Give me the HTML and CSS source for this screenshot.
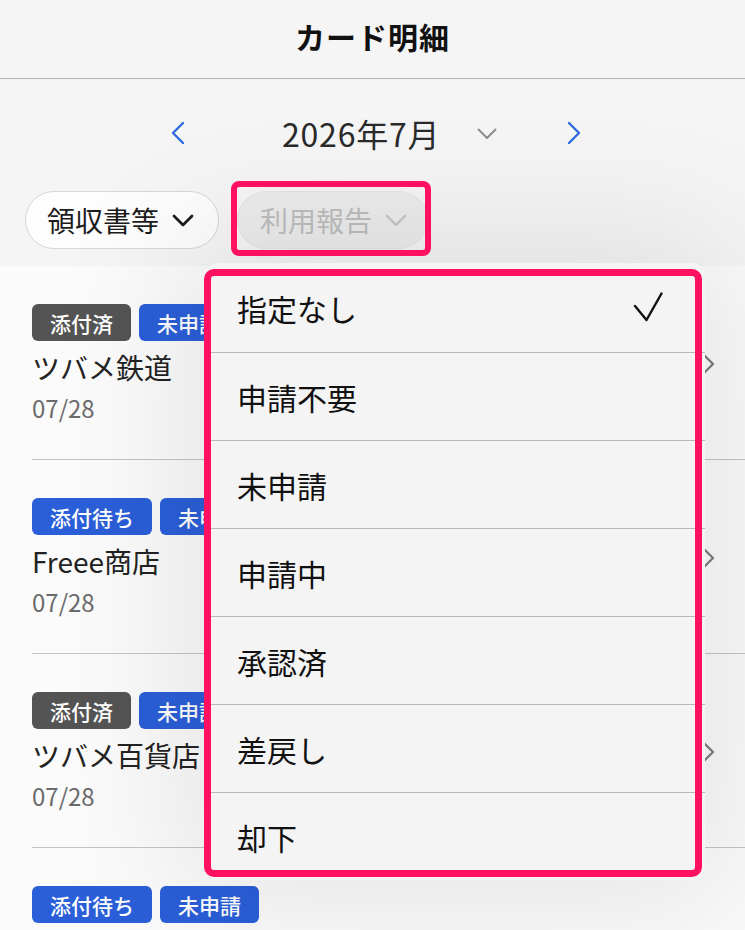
FILE: index.html
```html
<!DOCTYPE html>
<html lang="ja">

<head>
    <meta charset="UTF-8">
    <meta name="viewport" content="width=device-width, initial-scale=1.0">
    <title>カード明細</title>
    <link rel="stylesheet" href="styles.css">
</head>

<body>
    <header class="topbar">
        <h1>カード明細</h1>
    </header>

    <section class="controls">
        <div class="month-nav">
            <svg class="nav-prev" width="14" height="24" viewBox="0 0 14 24"><path d="M12 2 L2 12 L12 22" fill="none" stroke="#2f6be3" stroke-width="2.4" stroke-linecap="round" stroke-linejoin="round"/></svg>
            <span class="month-label">2026年7月</span>
            <svg class="month-down" width="20" height="12" viewBox="0 0 20 12"><path d="M1.5 1.5 L10 10 L18.5 1.5" fill="none" stroke="#8e8e8e" stroke-width="2" stroke-linecap="round" stroke-linejoin="round"/></svg>
            <svg class="nav-next" width="14" height="24" viewBox="0 0 14 24"><path d="M2 2 L12 12 L2 22" fill="none" stroke="#2f6be3" stroke-width="2.4" stroke-linecap="round" stroke-linejoin="round"/></svg>
        </div>

        <div class="filters">
            <button class="pill">領収書等
                <svg width="22" height="13" viewBox="0 0 22 13"><path d="M2 2 L11 11 L20 2" fill="none" stroke="#1c1c1c" stroke-width="2.8" stroke-linecap="round" stroke-linejoin="round"/></svg>
            </button>
            <button class="pill pill-open">利用報告
                <svg width="22" height="13" viewBox="0 0 22 13"><path d="M2 2 L11 11 L20 2" fill="none" stroke="#c4c4c4" stroke-width="2.4" stroke-linecap="round" stroke-linejoin="round"/></svg>
            </button>
        </div>
    </section>

    <ul class="card-list">
        <li class="card-item">
            <div class="item-body">
                <div class="tags"><span class="tag tag-done">添付済</span><span class="tag">未申請</span></div>
                <div class="item-name">ツバメ鉄道</div>
                <div class="item-date">07/28</div>
            </div>
            <svg class="item-arrow" width="13" height="22" viewBox="0 0 13 22"><path d="M2 2 L11 11 L2 20" fill="none" stroke="#7a7a7a" stroke-width="2.2" stroke-linecap="round" stroke-linejoin="round"/></svg>
        </li>
        <li class="card-item">
            <div class="item-body">
                <div class="tags"><span class="tag">添付待ち</span><span class="tag">未申請</span></div>
                <div class="item-name">Freee商店</div>
                <div class="item-date">07/28</div>
            </div>
            <svg class="item-arrow" width="13" height="22" viewBox="0 0 13 22"><path d="M2 2 L11 11 L2 20" fill="none" stroke="#7a7a7a" stroke-width="2.2" stroke-linecap="round" stroke-linejoin="round"/></svg>
        </li>
        <li class="card-item">
            <div class="item-body">
                <div class="tags"><span class="tag tag-done">添付済</span><span class="tag">未申請</span></div>
                <div class="item-name">ツバメ百貨店</div>
                <div class="item-date">07/28</div>
            </div>
            <svg class="item-arrow" width="13" height="22" viewBox="0 0 13 22"><path d="M2 2 L11 11 L2 20" fill="none" stroke="#7a7a7a" stroke-width="2.2" stroke-linecap="round" stroke-linejoin="round"/></svg>
        </li>
        <li class="card-item">
            <div class="item-body">
                <div class="tags"><span class="tag">添付待ち</span><span class="tag">未申請</span></div>
            </div>
        </li>
    </ul>

    <!-- status dropdown -->
    <div class="menu">
        <div class="menu-row">指定なし
            <svg class="menu-check" width="30" height="30" viewBox="0 0 30 30"><path d="M2 14 L13.5 28 L28.5 1.5" fill="none" stroke="#111" stroke-width="2.4" stroke-linecap="round" stroke-linejoin="round"/></svg>
        </div>
        <div class="menu-row">申請不要</div>
        <div class="menu-row">未申請</div>
        <div class="menu-row">申請中</div>
        <div class="menu-row">承認済</div>
        <div class="menu-row">差戻し</div>
        <div class="menu-row">却下</div>
    </div>

    <!-- highlight marks -->
    <div class="mark mark-filter"></div>
    <div class="mark mark-menu"></div>
</body>

</html>
```

FILE: styles.css
```css
* {
    margin: 0;
    padding: 0;
    box-sizing: border-box;
}

html,
body {
    height: 100%;
    overflow: hidden;
}

body {
    font-family: "Noto Sans CJK JP", "Noto Sans", sans-serif;
    background: #f5f5f5;
    color: #1a1a1a;
    position: relative;
}

/* Title bar */
.topbar {
    height: 79px;
    border-bottom: 1px solid #b4b4b4;
    display: flex;
    justify-content: center;
    align-items: center;
    padding-bottom: 6px;
}

.topbar h1 {
    font-size: 30px;
    font-weight: 700;
    color: #111;
    letter-spacing: 1px;
}

/* Month + filters */
.controls {
    height: 187px;
    padding: 30px 0 0 25px;
}

.month-nav {
    height: 48px;
    display: flex;
    align-items: center;
    padding-left: 146px;
}

.month-label {
    font-size: 32px;
    color: #2a2a2a;
    margin: 0 37px 0 97px;
    line-height: 1;
    letter-spacing: 0.8px;
}

.month-down {
    margin-top: 2px;
    margin-right: 70px;
}

.filters {
    display: flex;
    gap: 18px;
    margin-top: 34px;
}

.pill {
    height: 58px;
    border-radius: 29px;
    border: 1px solid #d6d6d6;
    background: #fdfdfd;
    font-family: inherit;
    font-size: 28px;
    color: #1c1c1c;
    display: flex;
    align-items: center;
    gap: 13px;
    padding: 0 24px 0 21px;
}

.pill-open {
    background: #ececec;
    border-color: #e4e4e4;
    color: #bdbdbd;
    padding: 0 20px 0 22px;
}

/* List */
.card-list {
    list-style: none;
    background: #fbfbfb;
    padding-left: 32px;
}

.card-item {
    display: flex;
    align-items: center;
    border-bottom: 1px solid #c4c4c4;
    padding: 38px 30px 35px 0;
}

.item-body {
    flex: 1;
}

.tags {
    display: flex;
    gap: 8px;
}

.tag {
    height: 37px;
    padding: 0 18px;
    border-radius: 6px;
    background: #2b5fd9;
    color: #fff;
    font-size: 21px;
    font-weight: 500;
    display: flex;
    align-items: center;
}

.tag-done {
    background: #545454;
}

.item-name {
    font-size: 28px;
    line-height: 36px;
    margin-top: 8px;
    color: #222;
}

.item-date {
    font-size: 24px;
    line-height: 32px;
    margin-top: 7px;
    color: #6b6b6b;
}

/* Dropdown menu */
.menu {
    position: absolute;
    left: 205px;
    top: 263px;
    width: 500px;
    padding-top: 1px;
    background: #f4f4f5;
    border-radius: 14px;
    box-shadow: 0 0 140px 30px rgba(0, 0, 0, 0.09);
}

.menu-row {
    height: 88px;
    display: flex;
    align-items: center;
    justify-content: space-between;
    padding: 0 42px 0 32px;
    font-size: 30px;
    color: #111;
    border-top: 1px solid #b8b8b8;
}

.menu-row:first-child {
    border-top: none;
}

.menu-check {
    margin-bottom: 3px;
}

/* Highlight marks */
.mark {
    position: absolute;
    border: 6px solid #ff1060;
}

.mark-filter {
    left: 231px;
    top: 181px;
    width: 200px;
    height: 75px;
    border-radius: 8px;
}

.mark-menu {
    left: 204px;
    top: 269px;
    width: 498px;
    height: 608px;
    border-width: 7px;
    border-radius: 10px;
}
```
